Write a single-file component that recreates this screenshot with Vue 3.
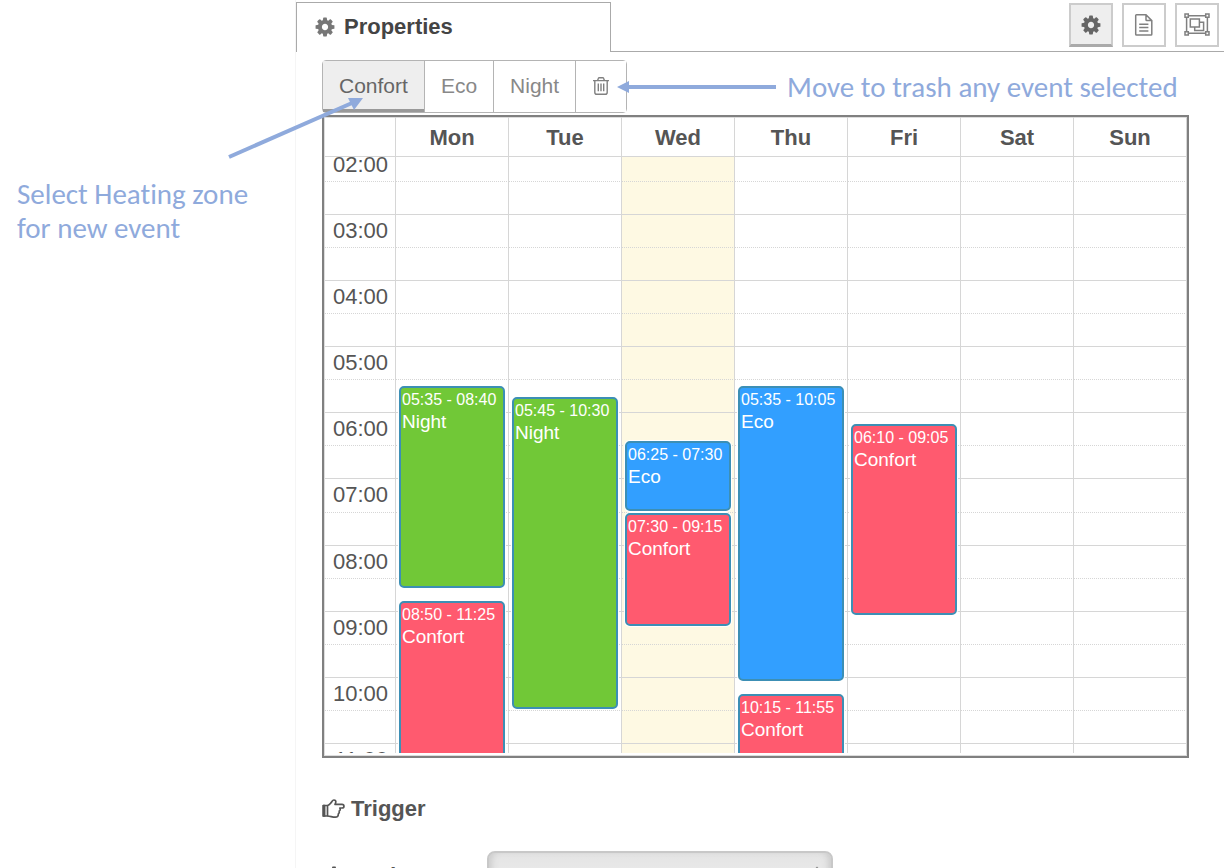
<script setup>
import { ref, onMounted } from 'vue'

const days = ['Mon', 'Tue', 'Wed', 'Thu', 'Fri', 'Sat', 'Sun']
const today = 2
const firstHour = 2
const lastHour = 12
const zones = ['Confort', 'Eco', 'Night']
const zone = ref('Confort')
const panel = ref('settings')
const scroller = ref(null)

const events = [
  { day: 0, start: '05:35', end: '08:40', zone: 'Night' },
  { day: 0, start: '08:50', end: '11:25', zone: 'Confort' },
  { day: 1, start: '05:45', end: '10:30', zone: 'Night' },
  { day: 2, start: '06:25', end: '07:30', zone: 'Eco' },
  { day: 2, start: '07:30', end: '09:15', zone: 'Confort' },
  { day: 3, start: '05:35', end: '10:05', zone: 'Eco' },
  { day: 3, start: '10:15', end: '11:55', zone: 'Confort' },
  { day: 4, start: '06:10', end: '09:05', zone: 'Confort' }
]

const share = (time) => {
  const [h, m] = time.split(':').map(Number)
  return ((h + m / 60 - firstHour) / (lastHour - firstHour)) * 100
}
const place = (e) => ({ top: share(e.start) + '%', height: share(e.end) - share(e.start) + '%' })
const hour = (n) => String(n).padStart(2, '0') + ':00'

// Start a few minutes into the first hour.
onMounted(() => {
  scroller.value.scrollTop = 9
})
</script>

<template>
  <div class="page">
    <aside class="notes">
      <p>Select Heating zone<br>for new event</p>
      <svg class="pointer" width="140" height="66" viewBox="0 0 140 66" aria-hidden="true">
        <path d="M1 63 L124 9" stroke="#8faadc" stroke-width="4" fill="none" />
        <path d="M135 4 L120 4 L126 16 Z" fill="#8faadc" />
      </svg>
    </aside>

    <main class="sidebar">
      <header class="tabs">
        <h1 class="tab">
          <svg width="22" height="22" viewBox="0 0 1792 1792" fill="#777" aria-hidden="true"><path d="M1152 896q0-106-75-181t-181-75-181 75-75 181 75 181 181 75 181-75 75-181zm512-109v222q0 12-8 23t-20 13l-185 28q-19 54-39 91 35 50 107 138 10 12 10 25t-9 23q-27 37-99 108t-94 71q-12 0-26-9l-138-108q-44 23-91 38-16 136-29 186-7 28-36 28h-222q-14 0-24.5-8.5t-11.5-21.5l-28-184q-49-16-90-37l-141 107q-10 9-25 9-14 0-25-11-126-114-165-168-7-10-7-23 0-12 8-23 15-21 51-66.5t54-70.5q-27-50-41-99l-183-27q-13-2-21-12.5t-8-23.5v-222q0-12 8-23t19-13l186-28q14-46 39-92-40-57-107-138-10-12-10-24 0-10 9-23 26-36 98.5-107.5t94.5-71.5q13 0 26 10l138 107q44-23 91-38 16-136 29-186 7-28 36-28h222q14 0 24.5 8.5t11.5 21.5l28 184q49 16 90 37l142-107q9-9 24-9 13 0 25 10 129 119 165 170 7 8 7 22 0 12-8 23-15 21-51 66.5t-54 70.5q26 50 41 98l183 28q13 2 21 12.5t8 23.5z" /></svg>
          Properties
        </h1>
        <div class="tools">
          <button type="button" aria-label="Properties" :class="{ on: panel === 'settings' }" @click="panel = 'settings'">
            <svg width="22" height="22" viewBox="0 0 1792 1792" fill="#666" aria-hidden="true"><path d="M1152 896q0-106-75-181t-181-75-181 75-75 181 75 181 181 75 181-75 75-181zm512-109v222q0 12-8 23t-20 13l-185 28q-19 54-39 91 35 50 107 138 10 12 10 25t-9 23q-27 37-99 108t-94 71q-12 0-26-9l-138-108q-44 23-91 38-16 136-29 186-7 28-36 28h-222q-14 0-24.5-8.5t-11.5-21.5l-28-184q-49-16-90-37l-141 107q-10 9-25 9-14 0-25-11-126-114-165-168-7-10-7-23 0-12 8-23 15-21 51-66.5t54-70.5q-27-50-41-99l-183-27q-13-2-21-12.5t-8-23.5v-222q0-12 8-23t19-13l186-28q14-46 39-92-40-57-107-138-10-12-10-24 0-10 9-23 26-36 98.5-107.5t94.5-71.5q13 0 26 10l138 107q44-23 91-38 16-136 29-186 7-28 36-28h222q14 0 24.5 8.5t11.5 21.5l28 184q49 16 90 37l142-107q9-9 24-9 13 0 25 10 129 119 165 170 7 8 7 22 0 12-8 23-15 21-51 66.5t-54 70.5q26 50 41 98l183 28q13 2 21 12.5t8 23.5z" /></svg>
          </button>
          <button type="button" aria-label="Description" :class="{ on: panel === 'description' }" @click="panel = 'description'">
            <svg width="20" height="24" viewBox="0 0 20 24" fill="none" stroke="#808080" stroke-width="1.5" aria-hidden="true">
              <path d="M2.5 1.8H12L17.8 7.6V21.2Q17.8 22 17 22H2.5Q1.7 22 1.7 21.2V2.6Q1.7 1.8 2.5 1.8ZM12 1.8V6.8Q12 7.6 12.8 7.6H17.8M5.2 11.3H14.4M5.2 14.6H14.4M5.2 17.9H14.4" />
            </svg>
          </button>
          <button type="button" aria-label="Appearance" :class="{ on: panel === 'appearance' }" @click="panel = 'appearance'">
            <svg width="26" height="24" viewBox="0 0 26 24" fill="none" stroke="#808080" stroke-width="1.5" aria-hidden="true">
              <path d="M4.5 2.7H21.5M4.5 20.3H21.5M2.6 4.5V18.5M23.4 4.5V18.5" />
              <path d="M1 1H4.3V4.3H1ZM21.7 1H25V4.3H21.7ZM1 18.7H4.3V22H1ZM21.7 18.7H25V22H21.7Z" />
              <path d="M6.3 6H15.4V14H6.3ZM15.4 9.2H19.6V17.5H10.7V14" />
            </svg>
          </button>
        </div>
      </header>

      <div class="content">
        <div class="toolbar">
          <div class="group" role="group" aria-label="Heating zone">
            <button v-for="z in zones" :key="z" type="button" :class="{ on: zone === z }" :aria-pressed="zone === z" @click="zone = z">{{ z }}</button>
            <button type="button" aria-label="Delete event">
              <svg width="18" height="20" viewBox="0 0 18 20" fill="none" stroke="#808080" stroke-width="1.4" aria-hidden="true">
                <path d="M1 4.6H17M5.6 4.4L6.4 2.3Q6.6 1.7 7.3 1.7H10.7Q11.4 1.7 11.6 2.3L12.4 4.4M2.8 4.6V16.2Q2.8 18.3 4.6 18.3H13.4Q15.2 18.3 15.2 16.2V4.6M6.3 7.6V15.2M9 7.6V15.2M11.7 7.6V15.2" />
              </svg>
            </button>
          </div>
          <svg class="arrow" width="159" height="14" viewBox="0 0 159 14" aria-hidden="true">
            <path d="M9 7H159" stroke="#8faadc" stroke-width="4" />
            <path d="M0 7L12 1V13Z" fill="#8faadc" />
          </svg>
          <span class="hint">Move to trash any event selected</span>
        </div>

        <section class="calendar" aria-label="Weekly schedule">
          <table class="head">
            <colgroup><col class="axis"><col v-for="d in days" :key="d"></colgroup>
            <thead>
              <tr><td></td><th v-for="d in days" :key="d" scope="col">{{ d }}</th></tr>
            </thead>
          </table>
          <div ref="scroller" class="scroller">
            <div class="day">
              <table class="slots">
                <colgroup><col class="axis"><col v-for="d in days" :key="d"></colgroup>
                <tbody>
                  <tr v-for="n in (lastHour - firstHour) * 2" :key="n" :class="{ half: n % 2 === 0 }">
                    <th scope="row"><template v-if="n % 2">{{ hour(firstHour + (n - 1) / 2) }}</template></th>
                    <td v-for="(d, i) in days" :key="d" :class="{ today: i === today }"></td>
                  </tr>
                </tbody>
              </table>
              <div class="lanes">
                <div v-for="(d, i) in days" :key="d" class="lane">
                  <div v-for="e in events.filter((x) => x.day === i)" :key="e.start" class="slot" :style="place(e)">
                    <article class="event" :class="e.zone.toLowerCase()">
                      <span class="time">{{ e.start }} - {{ e.end }}</span>
                      <span class="name">{{ e.zone }}</span>
                    </article>
                  </div>
                </div>
              </div>
            </div>
          </div>
        </section>

        <h2 class="label">
          <svg width="24" height="20" viewBox="0 0 24 20" fill="none" stroke="#555" stroke-width="1.7" stroke-linejoin="round" aria-hidden="true">
            <path d="M1.5 6.5H5.5V17H1.5Z" />
            <path d="M1.2 6.5H2.6V17H1.2Z" fill="#555" />
            <path d="M5.5 6.5C7.6 6.2 8.2 4.6 9.5 3.2C10.4 2.2 10.4 1 11.8 1C13.7 1 14.2 2.6 13.6 4L13 5.4H20C22.6 5.4 22.6 9 20 9H17.8C18.6 10.2 18.2 11.6 17.2 12.1C17.6 13.4 17.2 14.4 16.3 14.9C16.5 17 15.4 18.2 13.2 18.2C10 18.2 8.4 17 5.5 17" />
          </svg>
          Trigger
        </h2>

        <div class="field">
          <label class="label" for="mode">
            <svg width="24" height="22" viewBox="-80 0 1952 1792" fill="#555" aria-hidden="true"><path d="M1152 896q0-106-75-181t-181-75-181 75-75 181 75 181 181 75 181-75 75-181zm512-109v222q0 12-8 23t-20 13l-185 28q-19 54-39 91 35 50 107 138 10 12 10 25t-9 23q-27 37-99 108t-94 71q-12 0-26-9l-138-108q-44 23-91 38-16 136-29 186-7 28-36 28h-222q-14 0-24.5-8.5t-11.5-21.5l-28-184q-49-16-90-37l-141 107q-10 9-25 9-14 0-25-11-126-114-165-168-7-10-7-23 0-12 8-23 15-21 51-66.5t54-70.5q-27-50-41-99l-183-27q-13-2-21-12.5t-8-23.5v-222q0-12 8-23t19-13l186-28q14-46 39-92-40-57-107-138-10-12-10-24 0-10 9-23 26-36 98.5-107.5t94.5-71.5q13 0 26 10l138 107q44-23 91-38 16-136 29-186 7-28 36-28h222q14 0 24.5 8.5t11.5 21.5l28 184q49 16 90 37l142-107q9-9 24-9 13 0 25 10 129 119 165 170 7 8 7 22 0 12-8 23-15 21-51 66.5t-54 70.5q26 50 41 98l183 28q13 2 21 12.5t8 23.5z" /></svg>
            Mode
          </label>
          <div class="picker">
            <select id="mode"><option></option></select>
            <svg width="12" height="18" viewBox="0 0 12 18" fill="none" stroke="#888" stroke-width="2" aria-hidden="true"><path d="M2 6L6 2L10 6M2 12L6 16L10 12" /></svg>
          </div>
        </div>
      </div>
    </main>
  </div>
</template>

<style>
body { background: #fff; }
</style>

<style scoped>
* { box-sizing: border-box; }
.page {
  display: grid;
  grid-template-columns: 295px 1fr;
  height: 100vh;
  overflow: hidden;
  font-family: "Helvetica Neue", "Liberation Sans", Arial, sans-serif;
  font-size: 22px;
  color: #555;
}
.notes, .hint {
  font-family: Carlito, Lato, sans-serif;
  font-size: 29px;
  line-height: 34px;
  font-variant-ligatures: none;
  color: #8faadc;
  white-space: nowrap;
}
.notes { position: relative; padding: 177px 0 0 17px; }
.notes p { margin: 0; }
.pointer { position: absolute; left: 228px; top: 94px; z-index: 2; }
.sidebar { min-width: 0; border-left: 1px solid #f5f5f5; }
.tabs { display: flex; height: 52px; padding-top: 2px; }
.tab {
  display: flex;
  align-items: center;
  gap: 8px;
  width: 315px;
  margin: 0;
  padding: 0 17px 2px;
  border: 1px solid #aaa;
  border-bottom: 0;
  font-size: 22px;
  line-height: 26px;
  color: #444;
}
.tools {
  flex: 1;
  display: flex;
  justify-content: flex-end;
  gap: 9px;
  padding: 1px 5px 0 0;
  border-bottom: 1px solid #aaa;
}
button {
  display: flex;
  align-items: center;
  justify-content: center;
  padding: 0;
  border: 0;
  font: inherit;
  color: #888;
  background: #fff;
}
.tools button {
  width: 44px;
  height: 44px;
  border: 2px solid #ccc;
}
.tools .on { background: #eee; border-bottom: 3px solid #aaa; }
.content { padding: 8px 35px 0 26px; }
.toolbar { display: flex; align-items: center; height: 53px; }
.group {
  display: flex;
  height: 53px;
  border: 1px solid #b4b4b4;
  border-radius: 4px;
  font-size: 21px;
}
.group button { padding: 0 16px 2px; }
.group button + button { border-left: 1px solid #b4b4b4; }
.group .on { color: #666; background: #eee; border-bottom: 3px solid #999; padding-top: 1px; padding-bottom: 0; }
.arrow { flex: none; margin: 0 11px 0 -10px; z-index: 1; }
.calendar {
  margin-top: 2px;
  padding: 0 0 3px 1px;
  border: 2px solid #808080;
  box-shadow: inset 0 0 0 1px #ddd;
}
table { width: 100%; table-layout: fixed; border-collapse: separate; border-spacing: 0; }
.axis { width: 71px; }
td, th { padding: 0; border: 0 solid #d6d6d6; border-right-width: 1px; }
.head th, .head td { height: 40px; padding-top: 2px; border-bottom-width: 1px; font-size: 22px; line-height: 24px; }
.scroller { height: 596px; overflow-y: scroll; scrollbar-width: none; }
.day { position: relative; height: 661px; }
.slots { height: 100%; }
.slots th, .slots td { height: 33px; border-top-width: 1px; line-height: 24px; }
.slots th { padding-right: 7px; font-weight: 400; text-align: right; }
.half th, .half td { border-top-style: dotted; }
.slots .today { background: #fef9e3; }
.lanes {
  position: absolute;
  inset: 0 0 0 71px;
  display: grid;
  grid-template-columns: repeat(7, 1fr);
}
.lane { position: relative; }
.slot { position: absolute; left: 3px; right: 4px; padding: 1px 0; }
.event {
  height: 100%;
  padding: 1px;
  overflow: hidden;
  border: 2px solid #3c8fb5;
  border-radius: 5px;
  box-shadow: 0 0 0 1px #fff;
  color: #fff;
  white-space: nowrap;
}
.event span { display: block; line-height: 22px; }
.time { font-size: 16px; }
.name { font-size: 19px; }
.night { background: #71c837; }
.eco { background: #329fff; }
.confort { background: #ff5a6f; }
.label {
  display: flex;
  align-items: center;
  gap: 5px;
  margin: 0;
  font-size: 22px;
  line-height: 26px;
  font-weight: 700;
}
h2.label { margin-top: 38px; }
.field { display: flex; align-items: center; margin-top: 29px; }
.field .label { width: 165px; }
.picker { position: relative; }
.picker select {
  display: block;
  width: 346px;
  height: 50px;
  appearance: none;
  border: 2px solid #c8c8c8;
  border-radius: 8px;
  background: linear-gradient(#e4e4e4, #f0f0f0);
  box-shadow: inset 6px 0 6px -3px #ccc, inset -6px 0 6px -3px #ccc;
}
.picker svg { position: absolute; right: 10px; top: 15px; }
</style>
